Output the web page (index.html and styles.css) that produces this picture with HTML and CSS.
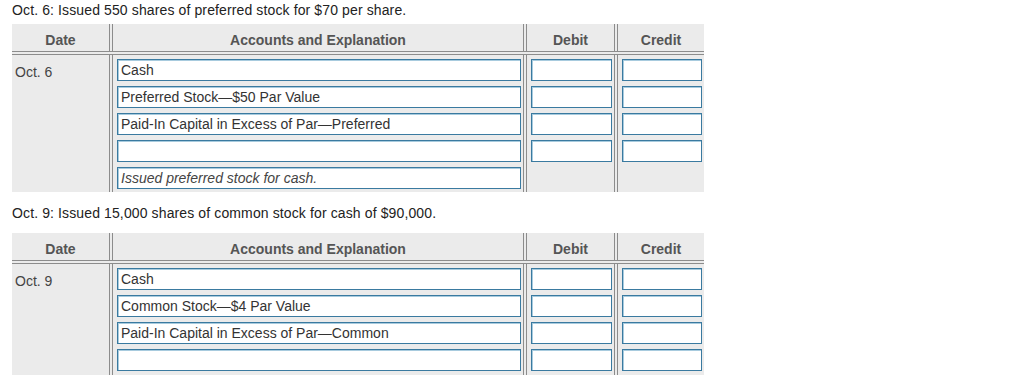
FILE: index.html
```html
<!DOCTYPE html>
<html lang="en">

<head>
    <meta charset="UTF-8">
    <meta name="viewport" content="width=device-width, initial-scale=1.0">
    <title>Journal Entries</title>
    <link rel="stylesheet" href="styles.css">
</head>

<body>
    <p class="prompt prompt-first">Oct. 6: Issued 550 shares of preferred stock for $70 per share.</p>

    <div class="journal">
        <div class="journal-head">
            <div class="col col-date">Date</div>
            <div class="col col-acct">Accounts and Explanation</div>
            <div class="col col-debit">Debit</div>
            <div class="col col-credit">Credit</div>
        </div>
        <div class="journal-body">
            <div class="col col-date">
                <span class="entry-date">Oct. 6</span>
            </div>
            <div class="col col-acct">
                <input type="text" value="Cash">
                <input type="text" value="Preferred Stock—$50 Par Value">
                <input type="text" value="Paid-In Capital in Excess of Par—Preferred">
                <input type="text" value="">
                <input type="text" class="explain" value="Issued preferred stock for cash.">
            </div>
            <div class="col col-debit">
                <input type="text">
                <input type="text">
                <input type="text">
                <input type="text">
            </div>
            <div class="col col-credit">
                <input type="text">
                <input type="text">
                <input type="text">
                <input type="text">
            </div>
        </div>
    </div>

    <p class="prompt prompt-next">Oct. 9: Issued 15,000 shares of common stock for cash of $90,000.</p>

    <div class="journal">
        <div class="journal-head">
            <div class="col col-date">Date</div>
            <div class="col col-acct">Accounts and Explanation</div>
            <div class="col col-debit">Debit</div>
            <div class="col col-credit">Credit</div>
        </div>
        <div class="journal-body">
            <div class="col col-date">
                <span class="entry-date">Oct. 9</span>
            </div>
            <div class="col col-acct">
                <input type="text" value="Cash">
                <input type="text" value="Common Stock—$4 Par Value">
                <input type="text" value="Paid-In Capital in Excess of Par—Common">
                <input type="text" value="">
                <input type="text" class="explain" value="">
            </div>
            <div class="col col-debit">
                <input type="text">
                <input type="text">
                <input type="text">
                <input type="text">
            </div>
            <div class="col col-credit">
                <input type="text">
                <input type="text">
                <input type="text">
                <input type="text">
            </div>
        </div>
    </div>
</body>

</html>
```

FILE: styles.css
```css
body {
    font-family: "Liberation Sans", Arial, sans-serif;
    font-size: 14px;
    line-height: 16px;
    margin: 0;
    padding: 0 0 0 12px;
    background-color: #fff;
    color: #222;
}

.prompt {
    margin: 0;
    letter-spacing: 0.12px;
}

.prompt-first {
    margin-top: 2px;
    margin-bottom: 6px;
}

.prompt-next {
    margin-top: 13px;
    margin-bottom: 12px;
}

/* journal table: four columns split by double grey rules */
.journal {
    width: 692px;
    background-color: #ebebeb;
}

.journal-head,
.journal-body {
    display: grid;
    grid-template-columns: 98px 412px 89px 87px;
    column-gap: 2px;
}

.journal-head {
    border-bottom: 1px solid #8c8c8c;
    margin-bottom: 2px;
}

.journal-body {
    border-top: 1px solid #8c8c8c;
}

.col-date {
    border-right: 1px solid #8c8c8c;
}

.col-acct,
.col-debit {
    border-left: 1px solid #8c8c8c;
    border-right: 1px solid #8c8c8c;
}

.col-credit {
    border-left: 1px solid #8c8c8c;
}

.journal-head .col {
    height: 27px;
    box-sizing: border-box;
    padding-top: 8px;
    text-align: center;
    font-weight: bold;
    color: #555;
}

.journal-body .col {
    display: flex;
    flex-direction: column;
    gap: 5px;
    padding: 4px 2px 3px 4px;
}

.journal-body .col-date {
    padding: 9px 0 0 3px;
}

.entry-date {
    color: #444;
}

input {
    display: block;
    width: 100%;
    height: 22px;
    box-sizing: border-box;
    margin: 0;
    padding: 0 3px;
    border: 1px solid #3a7aa0;
    box-shadow: inset 1px 1px 0 #a8cbde;
    background-color: #fff;
    font-family: "Liberation Sans", Arial, sans-serif;
    font-size: 14px;
    color: #333;
    outline: none;
}

input.explain {
    font-style: italic;
    color: #444;
}
```
